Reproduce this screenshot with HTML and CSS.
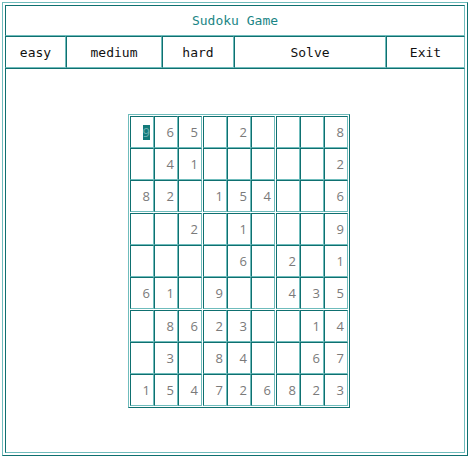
FILE: index.html
```html
<!DOCTYPE html>
<html>
<head>
<meta charset="utf-8">
<title>Sudoku Game</title>
<link rel="stylesheet" href="styles.css">
</head>
<body>
<div class="frame">
  <div class="title">Sudoku Game</div>
  <div class="menu">
    <div class="btn w-easy">easy</div>
    <div class="btn w-medium">medium</div>
    <div class="btn w-hard">hard</div>
    <div class="btn w-solve">Solve</div>
    <div class="btn w-exit">Exit</div>
  </div>
  <div class="main">
    <div class="board" id="board"></div>
  </div>
</div>
<script>
var rows = [
  "965020008",
  "041000002",
  "820154006",
  "002010009",
  "000060201",
  "610900435",
  "086230014",
  "030840067",
  "154726823"
];
var board = document.getElementById('board');
for (var br = 0; br < 3; br++) {
  for (var bc = 0; bc < 3; bc++) {
    var box = document.createElement('div');
    box.className = 'box';
    for (var r = 0; r < 3; r++) {
      for (var c = 0; c < 3; c++) {
        var ch = rows[br * 3 + r][bc * 3 + c];
        var cell = document.createElement('div');
        cell.className = 'cell';
        if (ch !== '0') {
          var s = document.createElement('span');
          s.textContent = ch;
          if (br === 0 && bc === 0 && r === 0 && c === 0) s.className = 'sel';
          cell.appendChild(s);
        }
        box.appendChild(cell);
      }
    }
    board.appendChild(box);
  }
}
</script>
</body>
</html>
```
FILE: styles.css
```css
html, body {
  margin: 0;
  padding: 0;
  background: #ffffff;
}
.frame {
  margin: 2px;
  width: 466px;
  height: 454px;
  box-sizing: border-box;
  border: 1px solid;
  border-color: #6fbcbc #0f7070 #0f7070 #6fbcbc;
  padding: 2px;
  display: flex;
  flex-direction: column;
  font-family: "DejaVu Sans Mono", monospace;
  font-size: 13px;
}
.title {
  height: 31px;
  box-sizing: border-box;
  border: 1px solid;
  border-color: #0f7070 #6fbcbc #6fbcbc #0f7070;
  color: #1a8585;
  display: flex;
  align-items: center;
  justify-content: center;
}
.menu {
  display: flex;
  height: 32px;
}
.btn {
  box-sizing: border-box;
  border: 1px solid;
  border-color: #0f7070 #6fbcbc #6fbcbc #0f7070;
  color: #111;
  display: flex;
  align-items: center;
  justify-content: center;
}
.w-easy { width: 61px; }
.w-medium { width: 96px; }
.w-hard { width: 72px; }
.w-solve { width: 152px; }
.w-exit { width: 79px; }
.main {
  flex: 1;
  box-sizing: border-box;
  border: 1px solid;
  border-color: #0f7070 #6fbcbc #6fbcbc #0f7070;
  padding: 45px 0 0 122px;
}
.board {
  display: grid;
  grid-template-columns: repeat(3, 72px);
  gap: 1px;
  width: max-content;
  border: 1px solid;
  border-color: #6fbcbc #0f7070 #0f7070 #6fbcbc;
  padding: 1px;
}
.box {
  display: grid;
  grid-template-columns: repeat(3, 24px);
  grid-template-rows: repeat(3, 32px);
}
.cell {
  box-sizing: border-box;
  border: 1px solid;
  border-color: #0f7070 #6fbcbc #6fbcbc #0f7070;
  font-family: "Open Sans", "DejaVu Sans", sans-serif;
  font-size: 13px;
  color: #7a7a7a;
  display: flex;
  align-items: center;
  justify-content: flex-end;
  padding-right: 3px;
}
.sel {
  background: #137a7a;
  color: #6fb0b0;
  line-height: 15px;
}
```
